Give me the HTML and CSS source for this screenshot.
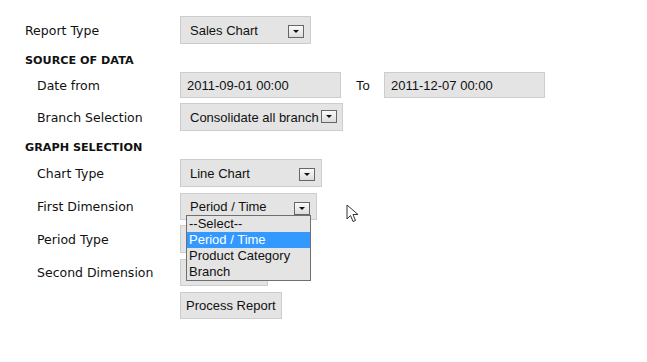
FILE: index.html
```html
<!DOCTYPE html>
<html lang="en">
<head>
  <meta charset="UTF-8" />
  <title>Report</title>
  <link rel="stylesheet" href="styles.css">
</head>
<body>
  <div class="report-form">
    <div class="row">
      <div class="label">Report Type</div>
      <div class="select w-report">Sales Chart <span class="arrow"></span></div>
    </div>

    <div class="section">SOURCE OF DATA</div>
    <div class="row row-date">
      <div class="label sub">Date from</div>
      <div class="input">2011-09-01 00:00</div>
      <div class="to">To</div>
      <div class="input">2011-12-07 00:00</div>
    </div>
    <div class="row">
      <div class="label sub">Branch Selection</div>
      <div class="select w-branch">Consolidate all branch <span class="arrow"></span></div>
    </div>

    <div class="section">GRAPH SELECTION</div>
    <div class="row">
      <div class="label sub">Chart Type</div>
      <div class="select w-chart">Line Chart <span class="arrow"></span></div>
    </div>
    <div class="row">
      <div class="label sub">First Dimension</div>
      <div class="select w-dim">Period / Time <span class="arrow"></span>
        <ul class="dropdown">
          <li>--Select--</li>
          <li class="active">Period / Time</li>
          <li>Product Category</li>
          <li>Branch</li>
        </ul>
      </div>
      <svg class="cursor" width="14" height="20" viewBox="0 0 14 20">
        <path d="M1 1 L1 15 L4.5 11.5 L7 17.5 L9.5 16.5 L7 10.5 L12 10.5 Z" fill="#fff" stroke="#333" stroke-width="1" stroke-linejoin="round"/>
      </svg>
    </div>
    <div class="row">
      <div class="label sub">Period Type</div>
      <div class="select w-period"></div>
    </div>
    <div class="row">
      <div class="label sub">Second Dimension</div>
      <div class="select w-second"></div>
    </div>
    <div class="row">
      <div class="label"></div>
      <div class="button">Process Report</div>
    </div>
  </div>
</body>
</html>
```

FILE: styles.css
```css
* { margin: 0; padding: 0; box-sizing: border-box; }
body { background: #fff; font-family: "DejaVu Sans", Verdana, sans-serif; color: #111; }
.report-form { padding: 16px 0 0 25px; display: flex; flex-direction: column; }
.row { display: flex; align-items: center; height: 28px; margin-bottom: 5px; position: relative; }
.row-date { height: 26px; }
.label { width: 155px; font-size: 12.5px; }
.label.sub { padding-left: 12px; }
.section { font-size: 11.2px; font-weight: bold; line-height: 14px; margin: 5px 0 4px; }
.select, .input, .button {
  font-family: "Liberation Sans", Arial, sans-serif;
  font-size: 13px;
  background: #e4e4e4;
  border: 1px solid #cdcdcd;
  height: 28px;
  display: flex;
  align-items: center;
  position: relative;
  color: #111;
}
.select { padding-left: 9px; }
.input { width: 161px; height: 26px; padding-left: 6px; }
.to { width: 43px; padding-left: 15px; font-family: "Liberation Sans", Arial, sans-serif; font-size: 13px; }
.button { height: 27px; padding: 0 5px; }
.arrow {
  position: absolute;
  right: 6px;
  top: 8px;
  width: 16px;
  height: 13px;
  border: 1px solid #666;
  background: linear-gradient(#fafafa, #dcdcdc);
}
.arrow::after {
  content: "";
  position: absolute;
  left: 4px;
  top: 4px;
  border-left: 3px solid transparent;
  border-right: 3px solid transparent;
  border-top: 3px solid #111;
}
.w-report { width: 131px; }
.w-branch { width: 163px; }
.w-branch .arrow { right: 5px; top: 6px; }
.w-chart { width: 142px; }
.w-dim { width: 137px; height: 27px; }
.w-period { width: 88px; }
.w-second { width: 88px; height: 27px; }
.dropdown {
  list-style: none;
  position: absolute;
  left: 5px;
  top: 21px;
  width: 125px;
  background: #e4e4e4;
  border: 1px solid #6f6f6f;
  z-index: 2;
}
.dropdown li { height: 16px; line-height: 16px; padding-left: 2px; }
.dropdown li.active { background: #3399ff; color: #fff; }
.cursor { position: absolute; left: 321px; top: 12px; }
```
